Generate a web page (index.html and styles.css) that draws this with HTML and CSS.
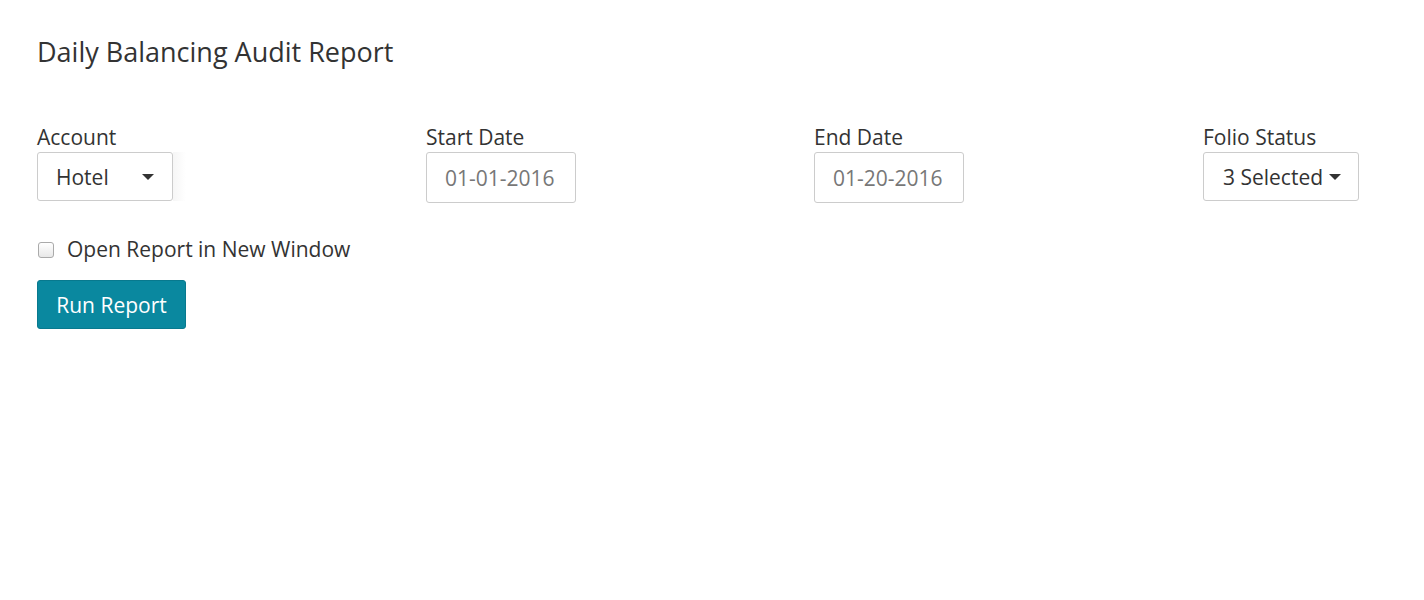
FILE: index.html
```html
<!DOCTYPE html>
<html>
<head>
<meta charset="utf-8">
<link rel="stylesheet" href="styles.css">
</head>
<body>
<div class="page">
  <h1 class="title">Daily Balancing Audit Report</h1>
  <div class="fields">
    <div class="field">
      <label class="label">Account</label>
      <div class="select-wrap">
        <button class="dropdown account">Hotel <span class="caret"></span></button>
        <span class="ghost"></span>
      </div>
    </div>
    <div class="field">
      <label class="label">Start Date</label>
      <input class="date" type="text" value="01-01-2016">
    </div>
    <div class="field">
      <label class="label">End Date</label>
      <input class="date" type="text" value="01-20-2016">
    </div>
    <div class="field">
      <label class="label">Folio Status</label>
      <button class="dropdown folio">3 Selected <span class="caret"></span></button>
    </div>
  </div>
  <label class="check-row"><span class="checkbox"></span>Open Report in New Window</label>
  <button class="run">Run Report</button>
</div>
</body>
</html>
```
FILE: styles.css
```css
* { box-sizing: border-box; }
html, body { margin: 0; background: #fff; }
body {
  font-family: "Open Sans", "Liberation Sans", sans-serif;
  color: #333;
}
.page { padding: 33px 37px; }
.title {
  margin: 0;
  font-size: 27px;
  font-weight: 400;
  color: #333;
  line-height: 38px;
}
.fields {
  display: grid;
  grid-template-columns: 389px 388px 389px auto;
  margin-top: 52px;
}
.field { display: flex; flex-direction: column; align-items: flex-start; }
.label {
  font-size: 21px;
  line-height: 29px;
  color: #333;
}
.select-wrap { display: flex; align-items: stretch; }
.ghost {
  width: 13px;
  background: linear-gradient(to right, #f6f6f6, #fff);
}
.dropdown {
  font-family: inherit;
  font-size: 21px;
  color: #333;
  background: #fff;
  border: 1px solid #ccc;
  border-radius: 3px;
  height: 49px;
  display: flex;
  align-items: center;
  white-space: nowrap;
  cursor: pointer;
}
.account { width: 136px; padding: 0 18px 0 18px; justify-content: space-between; }
.folio { width: 156px; padding: 0 10px 0 19px; gap: 6px; }
.caret {
  flex: none;
  width: 0; height: 0;
  border-left: 6px solid transparent;
  border-right: 6px solid transparent;
  border-top: 6px solid #333;
}
.date {
  font-family: inherit;
  font-size: 21px;
  color: #777;
  width: 150px;
  height: 51px;
  border: 1px solid #ccc;
  border-radius: 3px;
  padding: 0 8px 0 18px;
  text-align: left;
}
.check-row {
  display: flex;
  align-items: center;
  gap: 13px;
  margin-top: 32px;
  font-size: 21px;
  line-height: 29px;
  color: #333;
}
.checkbox {
  width: 16px; height: 16px;
  border: 1px solid #aaa;
  border-radius: 3px;
  background: linear-gradient(#fff, #e8e8e8);
  margin-left: 1px;
}
.run {
  display: block;
  margin-top: 16px;
  font-family: inherit;
  font-size: 21px;
  color: #fff;
  background: #0a889f;
  border: 1px solid #08798e;
  border-radius: 3px;
  width: 149px;
  height: 49px;
  cursor: pointer;
}
```
